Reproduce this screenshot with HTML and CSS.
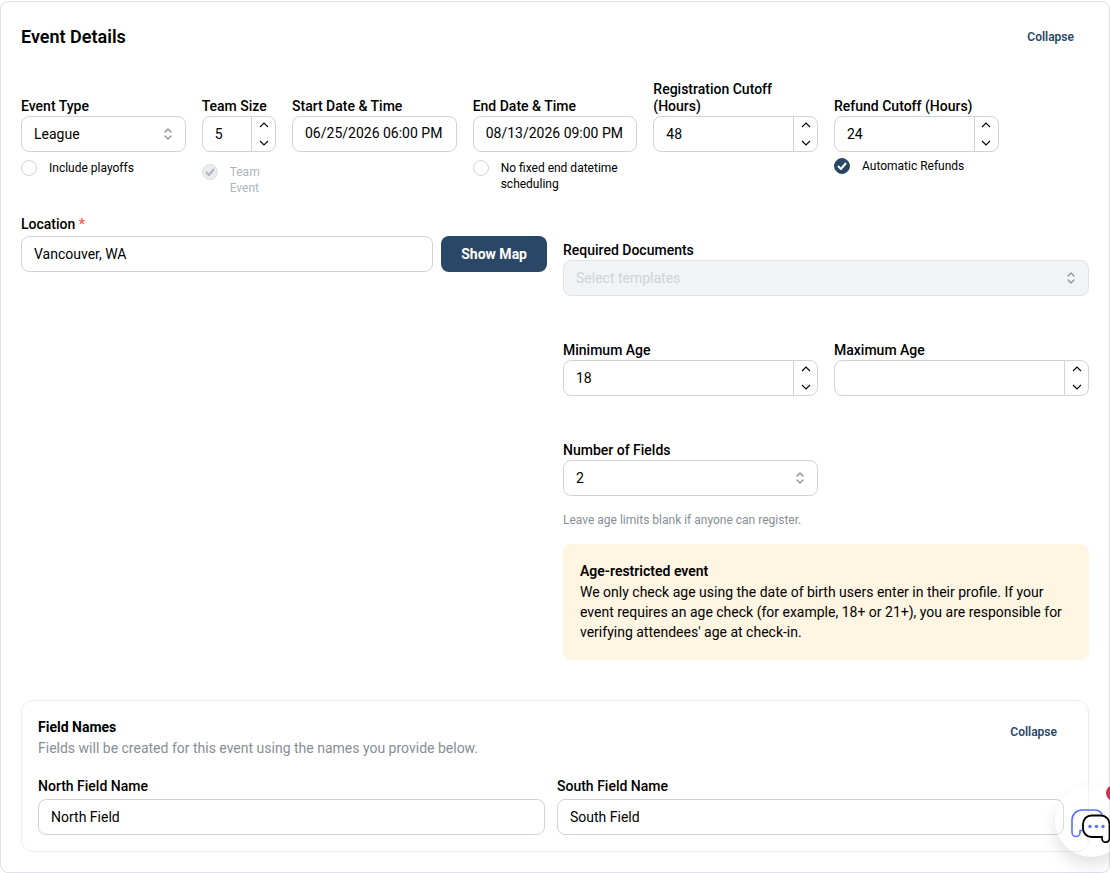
FILE: index.html
```html
<!DOCTYPE html>
<html lang="en">
<head>
<meta charset="UTF-8">
<meta name="viewport" content="width=device-width, initial-scale=1">
<title>Event Details</title>
<link rel="stylesheet" href="styles.css">
</head>
<body>

<!-- shared icons -->
<svg class="iconDefs" aria-hidden="true">
    <symbol id="iconUp" viewBox="0 0 10 6"><path d="M1 5l4-4 4 4" fill="none" stroke="currentColor" stroke-width="1.1"/></symbol>
    <symbol id="iconDown" viewBox="0 0 10 6"><path d="M1 1l4 4 4-4" fill="none" stroke="currentColor" stroke-width="1.1"/></symbol>
    <symbol id="iconSelect" viewBox="0 0 8 12"><path d="M1 4l3-3 3 3M1 8l3 3 3-3" fill="none" stroke="currentColor" stroke-width="1.2" stroke-linecap="round" stroke-linejoin="round"/></symbol>
    <symbol id="iconCheck" viewBox="0 0 10 8"><path d="M1 4l3 3 5-6" fill="none" stroke="currentColor" stroke-width="2"/></symbol>
</svg>

<form class="card">
    <div class="cardHeader">
        <h2 class="cardTitle">Event Details</h2>
        <button type="button" class="collapseBtn">Collapse</button>
    </div>

    <div class="formGrid topRow">
        <div class="span2">
            <label class="label" for="eventType">Event Type</label>
            <div class="selectWrap">
                <select class="inputBox" id="eventType"><option>League</option></select>
                <svg class="selectIcon"><use href="#iconSelect"/></svg>
            </div>
            <label class="checkRow">
                <span class="check"><input type="checkbox"></span>
                Include playoffs
            </label>
        </div>

        <div>
            <label class="label" for="teamSize">Team Size</label>
            <div class="numberBox">
                <input type="number" id="teamSize" value="5">
                <div class="steps">
                    <button type="button" aria-label="Increase"><svg><use href="#iconUp"/></svg></button>
                    <button type="button" aria-label="Decrease"><svg><use href="#iconDown"/></svg></button>
                </div>
            </div>
            <label class="checkRow checkLoose checkDisabled">
                <span class="check"><input type="checkbox" checked disabled><svg><use href="#iconCheck"/></svg></span>
                Team Event
            </label>
        </div>

        <div class="span2">
            <label class="label" for="startDate">Start Date &amp; Time</label>
            <input class="inputBox dateBox" id="startDate" type="text" value="06/25/2026 06:00 PM">
        </div>

        <div class="span2">
            <label class="label" for="endDate">End Date &amp; Time</label>
            <input class="inputBox dateBox" id="endDate" type="text" value="08/13/2026 09:00 PM">
            <label class="checkRow">
                <span class="check"><input type="checkbox"></span>
                No fixed end datetime scheduling
            </label>
        </div>

        <div class="span2">
            <label class="label" for="regCutoff">Registration Cutoff (Hours)</label>
            <div class="numberBox">
                <input type="number" id="regCutoff" value="48">
                <div class="steps">
                    <button type="button" aria-label="Increase"><svg><use href="#iconUp"/></svg></button>
                    <button type="button" aria-label="Decrease"><svg><use href="#iconDown"/></svg></button>
                </div>
            </div>
        </div>

        <div class="span2">
            <label class="label" for="refundCutoff">Refund Cutoff (Hours)</label>
            <div class="numberBox">
                <input type="number" id="refundCutoff" value="24">
                <div class="steps">
                    <button type="button" aria-label="Increase"><svg><use href="#iconUp"/></svg></button>
                    <button type="button" aria-label="Decrease"><svg><use href="#iconDown"/></svg></button>
                </div>
            </div>
            <label class="checkRow checkTight">
                <span class="check"><input type="checkbox" checked><svg><use href="#iconCheck"/></svg></span>
                Automatic Refunds
            </label>
        </div>
    </div>

    <div class="formGrid">
        <div class="span6">
            <label class="label locationLabel" for="location">Location&nbsp;<span class="required">*</span></label>
            <div class="locationRow">
                <input class="inputBox" id="location" type="text" value="Vancouver, WA">
                <button type="button" class="mapBtn">Show Map</button>
            </div>
        </div>

        <div class="span6 settings">
            <div class="spanAll">
                <label class="label" for="documents">Required Documents</label>
                <div class="selectWrap">
                    <select class="inputBox" id="documents" disabled><option>Select templates</option></select>
                    <svg class="selectIcon"><use href="#iconSelect"/></svg>
                </div>
            </div>
            <div>
                <label class="label" for="minAge">Minimum Age</label>
                <div class="numberBox">
                    <input type="number" id="minAge" value="18">
                    <div class="steps">
                        <button type="button" aria-label="Increase"><svg><use href="#iconUp"/></svg></button>
                        <button type="button" aria-label="Decrease"><svg><use href="#iconDown"/></svg></button>
                    </div>
                </div>
            </div>
            <div>
                <label class="label" for="maxAge">Maximum Age</label>
                <div class="numberBox">
                    <input type="number" id="maxAge">
                    <div class="steps">
                        <button type="button" aria-label="Increase"><svg><use href="#iconUp"/></svg></button>
                        <button type="button" aria-label="Decrease"><svg><use href="#iconDown"/></svg></button>
                    </div>
                </div>
            </div>
            <div>
                <label class="label" for="fieldCount">Number of Fields</label>
                <div class="selectWrap">
                    <select class="inputBox" id="fieldCount"><option>2</option></select>
                    <svg class="selectIcon"><use href="#iconSelect"/></svg>
                </div>
            </div>
            <div class="spanAll notes">
                <p class="hint">Leave age limits blank if anyone can register.</p>
                <div class="alert">
                    <div class="alertTitle">Age-restricted event</div>
                    <div>We only check age using the date of birth users enter in their profile. If your event requires an age check (for example, 18+ or 21+), you are responsible for verifying attendees' age at check-in.</div>
                </div>
            </div>
        </div>
    </div>

    <section class="fieldCard">
        <div class="fieldHeader">
            <div>
                <h3 class="fieldTitle">Field Names</h3>
                <p class="fieldText">Fields will be created for this event using the names you provide below.</p>
            </div>
            <button type="button" class="collapseBtn">Collapse</button>
        </div>
        <div class="fieldGrid">
            <div>
                <label class="fieldLabel" for="northField">North Field Name</label>
                <input class="inputBox" id="northField" type="text" value="North Field">
            </div>
            <div>
                <label class="fieldLabel" for="southField">South Field Name</label>
                <input class="inputBox" id="southField" type="text" value="South Field">
            </div>
        </div>
    </section>
</form>

<div class="chatWrap">
    <button type="button" class="chatBtn" aria-label="Open chat">
        <svg class="chatIcon" viewBox="0 0 40 34">
            <path d="M12 21.500H9V23.500A3.500 3.500 0 0 1 1 23.500V11A10 10 0 0 1 11 1H23.500C27 1 30 3 31.500 6" fill="none" stroke="#5b70f5" stroke-width="1.600"/>
            <path d="M20.500 6.500H30A8.500 8.500 0 0 1 38.500 15V29.500A3.500 3.500 0 0 1 31 29.500V28H20.500A8.500 8.500 0 0 1 12 19.500V15A8.500 8.500 0 0 1 20.500 6.500Z" fill="#fff" stroke="#000" stroke-width="1.800"/>
            <g fill="#5b70f5"><circle cx="19" cy="17.500" r="1.700"/><circle cx="25.500" cy="17.500" r="1.700"/><circle cx="32" cy="17.500" r="1.700"/></g>
        </svg>
    </button>
    <span class="chatBadge"></span>
</div>

</body>
</html>
```
FILE: styles.css
```css
*{
    box-sizing:border-box;
}
body{
    margin:0;
    padding-top:1px;
    font-family:Roboto, "Liberation Sans", sans-serif;
    font-size:14px;
    color:#000;
    background:#fff;
    overflow-x:hidden;
}
input, select, button{
    font:inherit;
    color:inherit;
}
button{
    cursor:pointer;
}
h2, h3, p{
    margin:0;
}
.iconDefs{
    display:none;
}
.card{
    border:1px solid #dee2e6;
    border-radius:8px;
    padding:20px;
}
.cardHeader{
    display:flex;
    align-items:center;
    justify-content:space-between;
    height:30px;
    margin-bottom:28px;
}
.cardTitle{
    font-size:18px;
    font-weight:600;
    line-height:28px;
}
.collapseBtn{
    border:none;
    background:none;
    padding:0 15px;
    height:30px;
    font-size:12px;
    font-weight:600;
    color:#2a4866;
}
.formGrid{
    display:grid;
    grid-template-columns:repeat(12, minmax(0, 1fr));
    column-gap:16px;
}
.topRow{
    margin-bottom:20px;
}
.span2{
    grid-column:span 2;
}
.span6{
    grid-column:span 6;
}
.spanAll{
    grid-column:1 / -1;
}
.label{
    display:flex;
    align-items:flex-end;
    min-height:36px;
    padding-bottom:1px;
    font-weight:500;
    line-height:17px;
}
.inputBox{
    display:block;
    width:100%;
    height:36px;
    border:1px solid #ced4da;
    border-radius:8px;
    background:#fff;
    padding:0 12px;
}
.dateBox{
    padding-bottom:2px;
}
.selectWrap{
    position:relative;
}
select.inputBox{
    appearance:none;
}
select.inputBox:disabled{
    background:#f1f3f5;
    border-color:#dee2e6;
    color:#ced4da;
    opacity:1;
}
.selectIcon{
    position:absolute;
    right:14px;
    top:12px;
    width:8px;
    height:12px;
    color:#868e96;
    pointer-events:none;
}
.numberBox{
    display:flex;
    height:36px;
    border:1px solid #ced4da;
    border-radius:8px;
}
.numberBox input{
    flex:1;
    min-width:0;
    border:none;
    background:none;
    padding:0 12px;
    appearance:textfield;
}
.numberBox input::-webkit-inner-spin-button{
    display:none;
}
.steps{
    width:24px;
    border-left:1px solid #ced4da;
    display:flex;
    flex-direction:column;
    gap:2px;
}
.steps button{
    flex:1;
    display:flex;
    align-items:center;
    justify-content:center;
    border:none;
    background:none;
    padding:0;
}
.steps svg{
    width:10px;
    height:6px;
}
.checkRow{
    display:flex;
    gap:12px;
    margin-top:8px;
    font-size:12px;
    line-height:16px;
}
.checkLoose{
    margin-top:12px;
}
.checkTight{
    margin-top:6px;
}
.check{
    display:grid;
    place-items:center;
    flex:none;
    width:16px;
    height:16px;
    color:#fff;
}
.check input, .check svg{
    grid-area:1 / 1;
}
.check input{
    appearance:none;
    width:16px;
    height:16px;
    margin:0;
    border:1px solid #ced4da;
    border-radius:50%;
    background:#fff;
}
.check input:checked{
    background:#2a4866;
    border-color:#2a4866;
}
.check svg{
    width:10px;
    height:8px;
    pointer-events:none;
}
.checkDisabled, .checkDisabled .check{
    color:#adb5bd;
}
.check input:disabled{
    background:#e9ecef;
    border-color:#dee2e6;
}
.locationLabel{
    min-height:20px;
    padding-bottom:3px;
}
.required{
    color:#fa5252;
}
.locationRow{
    display:flex;
    gap:8px;
}
.locationRow .inputBox{
    flex:1;
    min-width:0;
}
.mapBtn{
    border:none;
    border-radius:8px;
    background:#2a4866;
    color:#fff;
    padding:0 20px;
    font-weight:700;
    white-space:nowrap;
}
.settings{
    display:grid;
    grid-template-columns:repeat(2, minmax(0, 1fr));
    column-gap:16px;
    row-gap:28px;
    padding-top:8px;
}
.notes{
    margin-top:-12px;
}
.hint{
    margin-bottom:16px;
    font-size:12px;
    line-height:16px;
    color:#868e96;
}
.alert{
    border-radius:8px;
    background:#fff5e3;
    padding:17px 17px 18px;
    line-height:20px;
}
.alertTitle{
    font-weight:600;
    margin-bottom:1px;
}
.fieldCard{
    margin-top:40px;
    border:1px solid #e9edf5;
    border-radius:12px;
    padding:16px;
}
.fieldHeader{
    display:flex;
    justify-content:space-between;
    margin-bottom:19px;
}
.fieldTitle{
    font-size:14px;
    font-weight:700;
    line-height:20px;
}
.fieldText{
    line-height:22px;
    color:#868e96;
}
.fieldGrid{
    display:grid;
    grid-template-columns:1fr 1fr;
    gap:12px;
    padding-right:8px;
}
.fieldLabel{
    display:block;
    margin-bottom:4px;
    font-weight:500;
    line-height:17px;
}
/* floating chat launcher, runs past the right edge */
.chatWrap{
    position:fixed;
    right:0;
    bottom:16px;
    width:55px;
    height:72px;
    pointer-events:none;
}
.chatBtn{
    position:absolute;
    left:0;
    top:0;
    width:72px;
    height:72px;
    border:none;
    border-radius:50%;
    background:rgba(255,255,255,0.2);
    box-shadow:0 8px 16px rgba(0,0,0,0.12);
    padding:10px 0 0;
    display:flex;
    align-items:center;
    justify-content:center;
    pointer-events:auto;
}
.chatIcon{
    width:40px;
    height:34px;
}
.chatBadge{
    position:absolute;
    left:51px;
    top:0;
    width:16px;
    height:16px;
    border-radius:50%;
    background:#c9364f;
}
```
